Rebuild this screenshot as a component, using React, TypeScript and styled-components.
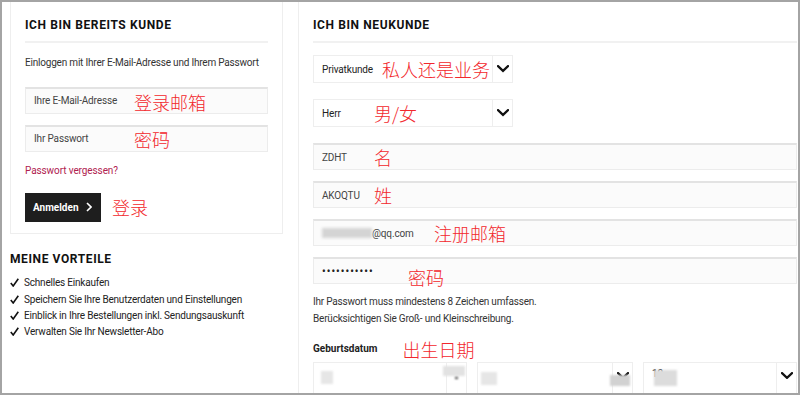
import React from 'react';
import styled, { createGlobalStyle } from 'styled-components';

const GlobalStyle = createGlobalStyle`
  html, body { margin: 0; padding: 0; background: #fff; }
  body { font-family: Roboto, "Liberation Sans", sans-serif; color: #333; }
  * { box-sizing: border-box; }
`;

const Frame = styled.div`
  width: 800px;
  height: 395px;
  border: 2px solid #a4a4a4;
  display: flex;
  overflow: hidden;
  background: #fff;
`;

const LeftCol = styled.div`
  width: 296px;
  flex-shrink: 0;
  padding-left: 8px;
`;

const LoginBox = styled.section`
  width: 273px;
  border: 1px solid #eeeeee;
  border-top: none;
  padding: 15px 14px 11px;
`;

const RightPanel = styled.section`
  flex: 1;
  border-left: 1px solid #eeeeee;
  padding: 15px 1px 0 14px;
`;

const Heading = styled.h2<{ $mt?: number }>`
  margin: ${(p) => p.$mt ?? 0}px 0 0;
  font-size: 12px;
  line-height: 16px;
  font-weight: 700;
  letter-spacing: 0.6px;
  color: #111;
  text-transform: uppercase;
`;

const Rule = styled.div`
  height: 2px;
  background: #f1f1f1;
  margin-top: 8px;
`;

const Text = styled.p<{ $mt?: number }>`
  margin: ${(p) => p.$mt ?? 0}px 0 0;
  font-size: 10px;
  line-height: 16.5px;
  letter-spacing: -0.2px;
  white-space: nowrap;
  color: #333;
`;

const Field = styled.div<{ $mt: number }>`
  position: relative;
  margin-top: ${(p) => p.$mt}px;
  height: 27px;
  display: flex;
  align-items: center;
  padding-left: 8px;
  border: 1px solid #ececec;
  border-top: 2px solid #e3e3e3;
  background: #fbfbfb;
  font-size: 10px;
  letter-spacing: -0.15px;
  color: #444;
`;

const Select = styled.div<{ $mt?: number; $w?: number }>`
  position: relative;
  margin-top: ${(p) => p.$mt ?? 0}px;
  width: ${(p) => (p.$w ? `${p.$w}px` : 'auto')};
  height: 28px;
  display: flex;
  border: 1px solid #eeeeee;
  background: #fff;
`;

const SelectValue = styled.div<{ $top?: boolean }>`
  flex: 1;
  position: relative;
  display: flex;
  align-items: ${(p) => (p.$top ? 'flex-start' : 'center')};
  padding: ${(p) => (p.$top ? '5px 0 0 8px' : '0 0 0 8px')};
  font-size: 10px;
  letter-spacing: -0.15px;
  color: #222;
`;

const SelectArrow = styled.div<{ $top?: boolean }>`
  position: relative;
  width: 20px;
  border-left: 1px solid #eeeeee;
  display: flex;
  align-items: ${(p) => (p.$top ? 'flex-start' : 'center')};
  padding-top: ${(p) => (p.$top ? '9px' : '0')};
  justify-content: center;
`;

const Note = styled.span`
  font-family: "Noto Sans CJK SC", sans-serif;
  font-size: 18px;
  line-height: 1;
  font-weight: 300;
  letter-spacing: 0;
  color: #f2272c;
  white-space: nowrap;
`;

const OverNote = styled(Note)<{ $x: number; $dy?: number }>`
  position: absolute;
  left: ${(p) => p.$x}px;
  top: 50%;
  transform: translateY(calc(-50% + ${(p) => p.$dy ?? 0}px));
`;

const ForgotLink = styled.a`
  display: block;
  margin-top: 12px;
  font-size: 10px;
  line-height: 14px;
  letter-spacing: -0.1px;
  color: #b0214f;
  text-decoration: none;
`;

const ButtonRow = styled.div`
  margin-top: 15px;
  display: flex;
  align-items: center;
  gap: 11px;
`;

const Button = styled.button`
  width: 76px;
  height: 29px;
  border: none;
  background: #1e1e1e;
  color: #fff;
  font-family: Roboto, "Liberation Sans", sans-serif;
  font-size: 10px;
  font-weight: 700;
  display: flex;
  align-items: center;
  justify-content: space-between;
  padding: 0 9px 0 8px;
`;

const Benefits = styled.ul`
  list-style: none;
  margin: 8px 0 0;
  padding: 0;
`;

const Benefit = styled.li`
  display: flex;
  align-items: center;
  gap: 5px;
  height: 16.4px;
  font-size: 10px;
  letter-spacing: -0.2px;
  color: #222;
`;

const Blur = styled.span<{ $w: number; $h: number; $c?: string }>`
  display: inline-block;
  width: ${(p) => p.$w}px;
  height: ${(p) => p.$h}px;
  background: ${(p) => p.$c ?? '#d4d4d4'};
  filter: blur(1.5px);
`;

const Dots = styled.span`
  font-size: 10px;
  font-weight: 700;
  letter-spacing: 1.1px;
  color: #222;
`;

const LabelRow = styled.div`
  margin-top: 13px;
  display: flex;
  align-items: center;
  gap: 25px;
`;

const Label = styled.span`
  font-size: 10px;
  line-height: 16px;
  font-weight: 700;
  color: #222;
`;

const DateRow = styled.div`
  margin-top: 4px;
  display: grid;
  grid-template-columns: 154px 156px 1fr;
  gap: 10px;
`;

const DateSelect = styled(Select)`
  height: 34px;
`;

const Cover = styled.span<{ $x: number; $y: number; $w: number; $h: number; $c: string }>`
  position: absolute;
  left: ${(p) => p.$x}px;
  top: ${(p) => p.$y}px;
  width: ${(p) => p.$w}px;
  height: ${(p) => p.$h}px;
  background: ${(p) => p.$c};
  filter: blur(1px);
`;

const Chevron = ({ color = '#111', w = 12 }: { color?: string; w?: number }) => (
  <svg width={w} height={w * 0.6} viewBox="0 0 12 7" fill="none">
    <path d="M1 1l5 4.8L11 1" stroke={color} strokeWidth="2.2" strokeLinecap="square" />
  </svg>
);

const ButtonChevron = () => (
  <svg width="6" height="10" viewBox="0 0 6 10" fill="none">
    <path d="M1 1l4 4-4 4" stroke="#fff" strokeWidth="1.6" />
  </svg>
);

const Check = () => (
  <svg width="9" height="9" viewBox="0 0 9 9" fill="none">
    <path d="M0.8 5l2.4 3L8.3 0.8" stroke="#111" strokeWidth="1.6" />
  </svg>
);

const benefits = [
  'Schnelles Einkaufen',
  'Speichern Sie Ihre Benutzerdaten und Einstellungen',
  'Einblick in Ihre Bestellungen inkl. Sendungsauskunft',
  'Verwalten Sie Ihr Newsletter-Abo',
];

export default function App() {
  return (
    <>
      <GlobalStyle />
      <Frame>
        <LeftCol>
          <LoginBox>
            <Heading>Ich bin bereits Kunde</Heading>
            <Rule />
            <Text $mt={12}>Einloggen mit Ihrer E-Mail-Adresse und Ihrem Passwort</Text>
            <Field $mt={15}>
              Ihre E-Mail-Adresse
              <OverNote $x={108} $dy={1}>登录邮箱</OverNote>
            </Field>
            <Field $mt={11}>
              Ihr Passwort
              <OverNote $x={108}>密码</OverNote>
            </Field>
            <ForgotLink href="#">Passwort vergessen?</ForgotLink>
            <ButtonRow>
              <Button>
                Anmelden
                <ButtonChevron />
              </Button>
              <Note>登录</Note>
            </ButtonRow>
          </LoginBox>
          <Heading $mt={17}>Meine Vorteile</Heading>
          <Benefits>
            {benefits.map((b) => (
              <Benefit key={b}>
                <Check />
                {b}
              </Benefit>
            ))}
          </Benefits>
        </LeftCol>

        <RightPanel>
          <Heading>Ich bin Neukunde</Heading>
          <Rule />
          <Select $mt={12} $w={200}>
            <SelectValue>
              Privatkunde
              <OverNote $x={68}>私人还是业务</OverNote>
            </SelectValue>
            <SelectArrow>
              <Chevron />
            </SelectArrow>
          </Select>
          <Select $mt={16} $w={200}>
            <SelectValue>
              Herr
              <OverNote $x={60}>男/女</OverNote>
            </SelectValue>
            <SelectArrow>
              <Chevron />
            </SelectArrow>
          </Select>
          <Field $mt={16}>
            ZDHT
            <OverNote $x={60}>名</OverNote>
          </Field>
          <Field $mt={11}>
            AKOQTU
            <OverNote $x={60}>姓</OverNote>
          </Field>
          <Field $mt={11}>
            <Blur $w={50} $h={10} />
            @qq.com
            <OverNote $x={120}>注册邮箱</OverNote>
          </Field>
          <Field $mt={11}>
            <Dots>•••••••••••</Dots>
            <OverNote $x={94} $dy={6}>密码</OverNote>
          </Field>
          <Text $mt={10}>
            Ihr Passwort muss mindestens 8 Zeichen umfassen.
            <br />
            Berücksichtigen Sie Groß- und Kleinschreibung.
          </Text>
          <LabelRow>
            <Label>Geburtsdatum</Label>
            <Note>出生日期</Note>
          </LabelRow>
          <DateRow>
            <DateSelect>
              <SelectValue $top>
                <Cover $x={7} $y={8} $w={12} $h={13} $c="#e6e6e6" />
              </SelectValue>
              <SelectArrow $top>
                <Cover $x={-4} $y={3} $w={22} $h={10} $c="#e2e2e2" />
                <Cover $x={8} $y={14} $w={3} $h={2} $c="#444" />
              </SelectArrow>
            </DateSelect>
            <DateSelect>
              <SelectValue $top>
                <Cover $x={3} $y={9} $w={16} $h={13} $c="#e6e6e6" />
              </SelectValue>
              <SelectArrow $top>
                <Chevron />
                <Cover $x={-3} $y={12} $w={20} $h={11} $c="#d2d2d2" />
              </SelectArrow>
            </DateSelect>
            <DateSelect>
              <SelectValue $top>
                10
                <Cover $x={10} $y={7} $w={23} $h={16} $c="#dcdcdc" />
              </SelectValue>
              <SelectArrow $top>
                <Chevron />
              </SelectArrow>
            </DateSelect>
          </DateRow>
        </RightPanel>
      </Frame>
    </>
  );
}
